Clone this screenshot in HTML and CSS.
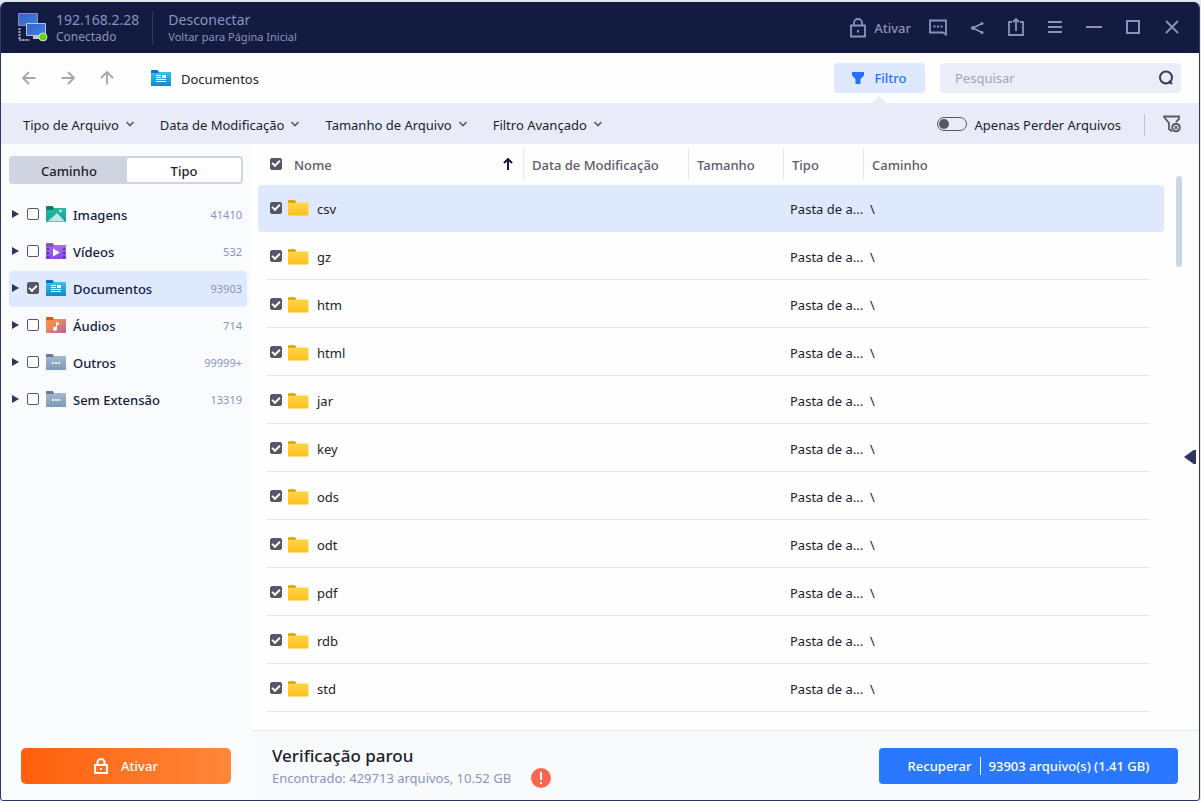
FILE: index.html
```
<!DOCTYPE html>
<html lang="pt-BR">
<head>
    <meta charset="UTF-8">
    <meta name="viewport" content="width=device-width, initial-scale=1.0">
    <title>192.168.2.28 - Documentos</title>
    <link rel="stylesheet" href="styles.css">
</head>
<body>

    <!-- Shared icons -->
    <svg class="sprite" aria-hidden="true">
        <defs>
            <linearGradient id="g-yellow" x1="0" y1="0" x2="0" y2="1"><stop offset="0" stop-color="#ffd54a"/><stop offset="1" stop-color="#ffc01e"/></linearGradient>
            <linearGradient id="g-green" x1="0" y1="0" x2="0" y2="1"><stop offset="0" stop-color="#2db8a0"/><stop offset="1" stop-color="#129f9c"/></linearGradient>
            <linearGradient id="g-purple" x1="0" y1="0" x2="0" y2="1"><stop offset="0" stop-color="#ac6cf4"/><stop offset="1" stop-color="#8747e4"/></linearGradient>
            <linearGradient id="g-blue" x1="0" y1="0" x2="0" y2="1"><stop offset="0" stop-color="#3bc5e2"/><stop offset="1" stop-color="#1484cf"/></linearGradient>
            <linearGradient id="g-orange" x1="0" y1="0" x2="1" y2="1"><stop offset="0.3" stop-color="#fa8b50"/><stop offset="1" stop-color="#a868a8"/></linearGradient>
            <linearGradient id="g-gray" x1="0" y1="0" x2="0" y2="1"><stop offset="0" stop-color="#a5b8cd"/><stop offset="1" stop-color="#7f99b7"/></linearGradient>
            <linearGradient id="g-screen" x1="0" y1="0" x2="1" y2="1"><stop offset="0" stop-color="#3263c8"/><stop offset="1" stop-color="#3f80e8"/></linearGradient>
        </defs>
        <symbol id="folder" viewBox="0 0 22 17"><path d="M1 3.500h20q.5 0 .5.500v12q0 .5-.5.500H1.500q-.5 0-.5-.5z" fill="url(#g-yellow)"/><path d="M1 4V1.500q0-.5.500-.5h6l2 2-1 1z" fill="#dca60c"/></symbol>
        <symbol id="f-image" viewBox="0 0 20 16"><path d="M0 2h20v14H0z" fill="url(#g-green)"/><path d="M0 4V1q0-1 1-1h5.500l1.500 2-1 2z" fill="#0a8064"/><path d="M0 16l5-5 3 3z" fill="#3bc4b4"/><path d="M2 15.500L11 7l8 8.500z" fill="#b9ede4"/><circle cx="14.500" cy="5" r="1.300" fill="#d9f7f0"/></symbol>
        <symbol id="f-video" viewBox="0 0 20 16"><path d="M0 2h20v14H0z" fill="url(#g-purple)"/><path d="M0 4V1q0-1 1-1h5.500l1.500 2-1 2z" fill="#8355c0"/><path d="M7 5.500v8l7-4z" fill="#fff"/><path d="M1 5h2v2H1zm0 4h2v2H1zm0 4h2v2H1zM17 5h2v2h-2zm0 4h2v2h-2zm0 4h2v2h-2z" fill="#573c80"/></symbol>
        <symbol id="f-doc" viewBox="0 0 20 16"><path d="M0 2h20v14H0z" fill="url(#g-blue)"/><path d="M0 3V1q0-1 1-1h5.500l1.500 2-1 1z" fill="#0870d0"/><path d="M5 5.500h5M5 7.500h5M5 9.500h10M5 11.500h10" stroke="#fff" fill="none"/><path d="M11 5h4v3h-4z" fill="#fff"/></symbol>
        <symbol id="f-audio" viewBox="0 0 20 16"><path d="M0 2h20v14H0z" fill="url(#g-orange)"/><path d="M0 3V1q0-1 1-1h5.500l1.500 2-1 1z" fill="#c56310"/><path d="M10 5l3 1v2l-2-.5V12a2 2 0 1 1-1-2z" fill="#fff"/></symbol>
        <symbol id="f-other" viewBox="0 0 20 16"><path d="M0 2h20v14H0z" fill="url(#g-gray)"/><path d="M0 3V1q0-1 1-1h5.500l1.500 2-1 1z" fill="#657a94"/><path d="M6 8h2v2H6zm3 0h2v2H9zm3 0h2v2h-2z" fill="#edf2f7"/></symbol>
        <symbol id="lock" viewBox="0 0 16 20"><path d="M1 7.500h14v11H1zM4 7.500V5a4 4 0 0 1 8 0v2.500" fill="none" stroke="currentColor" stroke-width="1.800"/><path d="M7 12h2v2.500H7z" fill="currentColor"/></symbol>
        <symbol id="lock-bold" viewBox="0 0 14 16"><path d="M1 7h12v8H1zM3.500 7V4.500a3.500 3.500 0 0 1 7 0V7" fill="none" stroke="currentColor" stroke-width="2"/><path d="M6 10h2v2H6z" fill="currentColor"/></symbol>
        <symbol id="chevron" viewBox="0 0 10 6"><path d="M1.500 1L5 4.500 8.500 1" fill="none" stroke="currentColor" stroke-width="1.600"/></symbol>
    </svg>

    <div class="window">
        <header class="titlebar">
            <svg class="logo" viewBox="0 0 30 30">
                <path d="M1.500 15v12h10" fill="none" stroke="#a9b1c6" stroke-width="2" stroke-dasharray="2 1"/>
                <path d="M.5.500h19v12H.5z" fill="url(#g-screen)" stroke="#8a91a5"/>
                <path d="M8.500 10.500h19v12h-19z" fill="url(#g-screen)" stroke="#b8c2d6"/>
                <path d="M15 23h7v3h-7z" fill="#c5c9d2"/>
                <circle cx="25" cy="24" r="4" fill="#62d800" stroke="#cddcc8"/>
            </svg>
            <div class="host">
                <span class="big">192.168.2.28</span>
                <span class="small">Conectado</span>
            </div>
            <div class="session">
                <a class="big" href="#">Desconectar</a>
                <a class="small" href="#">Voltar para Página Inicial</a>
            </div>
            <div class="window-tools">
                <button class="activate-link"><svg width="16" height="20"><use href="#lock"/></svg>Ativar</button>
                <button aria-label="Comentários"><svg width="20" height="20" viewBox="0 0 20 20"><path d="M2 2.500h16v14l-3-2H2zM5.500 8.500h2m1.500 0h2m1.500 0h2" fill="none" stroke="currentColor" stroke-width="1.800"/></svg></button>
                <button aria-label="Compartilhar"><svg width="20" height="20" viewBox="0 0 20 20"><path d="M15 5.500L6 10l9 4.500" fill="none" stroke="currentColor" stroke-width="1.800"/><circle cx="6" cy="10" r="2" fill="currentColor"/><circle cx="15" cy="5.500" r="1.500" fill="currentColor"/><circle cx="15" cy="14.500" r="1.500" fill="currentColor"/></svg></button>
                <button aria-label="Exportar"><svg width="20" height="20" viewBox="0 0 20 20"><path d="M6 4H3v13h14V4h-3M10 13V2M7 4l3-3 3 3" fill="none" stroke="currentColor" stroke-width="1.800"/></svg></button>
                <button aria-label="Menu"><svg width="20" height="20" viewBox="0 0 20 20"><path d="M3 4h14M3 9h14M3 14h14" stroke="currentColor" stroke-width="2"/></svg></button>
                <button aria-label="Minimizar"><svg width="20" height="20" viewBox="0 0 20 20"><path d="M2 9h16" stroke="currentColor" stroke-width="2"/></svg></button>
                <button aria-label="Maximizar"><svg width="20" height="20" viewBox="0 0 20 20"><path d="M4 3h12v12H4z" fill="none" stroke="currentColor" stroke-width="2"/></svg></button>
                <button aria-label="Fechar"><svg width="20" height="20" viewBox="0 0 20 20"><path d="M4 3l12 12M16 3L4 15" stroke="currentColor" stroke-width="1.800"/></svg></button>
            </div>
        </header>

        <nav class="toolbar">
            <button aria-label="Voltar"><svg width="14" height="14" viewBox="0 0 14 14"><path d="M13.500 7H1.500M7 1L1 7l6 6" fill="none" stroke="currentColor" stroke-width="1.800"/></svg></button>
            <button aria-label="Avançar"><svg width="14" height="14" viewBox="0 0 14 14"><path d="M.5 7h12M7 1l6 6-6 6" fill="none" stroke="currentColor" stroke-width="1.800"/></svg></button>
            <button aria-label="Acima"><svg width="14" height="14" viewBox="0 0 14 14"><path d="M7 13.500V1.500M1 7l6-6 6 6" fill="none" stroke="currentColor" stroke-width="1.800"/></svg></button>
            <svg class="crumb-icon" width="20" height="16"><use href="#f-doc"/></svg>
            <span class="crumb">Documentos</span>
            <button class="filter-btn"><svg width="12" height="12" viewBox="0 0 12 12"><path d="M0 0h12v3.500L8.500 7v5h-5V7L0 3.500z" fill="currentColor"/></svg>Filtro</button>
            <div class="search">
                <input type="text" placeholder="Pesquisar" aria-label="Pesquisar">
                <svg width="16" height="16" viewBox="0 0 16 16"><circle cx="8" cy="7.500" r="6" fill="none" stroke="currentColor" stroke-width="2"/><path d="M11 11l3 3" stroke="currentColor" stroke-width="2"/></svg>
            </div>
        </nav>

        <div class="filterbar">
            <button>Tipo de Arquivo<svg width="10" height="6"><use href="#chevron"/></svg></button>
            <button>Data de Modificação<svg width="10" height="6"><use href="#chevron"/></svg></button>
            <button>Tamanho de Arquivo<svg width="10" height="6"><use href="#chevron"/></svg></button>
            <button>Filtro Avançado<svg width="10" height="6"><use href="#chevron"/></svg></button>
            <label class="lost-only"><input type="checkbox" class="switch">Apenas Perder Arquivos</label>
            <button class="clear-filter" aria-label="Limpar filtro"><svg width="18" height="18" viewBox="0 0 18 18"><path d="M9 16.500L6 14V8L1 2V1.500h15V4l-3 3" fill="none" stroke="currentColor" stroke-width="1.800"/><circle cx="13" cy="12.500" r="3.800" fill="none" stroke="currentColor" stroke-width="2"/><path d="M11.500 11l3 3m0-3l-3 3" stroke="currentColor" stroke-width="1.200"/></svg></button>
        </div>

        <div class="content">
            <aside class="sidebar">
                <div class="tabs">
                    <button>Caminho</button>
                    <button class="active">Tipo</button>
                </div>
                <ul class="types">
                    <li><label><input type="checkbox"><svg width="20" height="16"><use href="#f-image"/></svg><span>Imagens</span><small>41410</small></label></li>
                    <li><label><input type="checkbox"><svg width="20" height="16"><use href="#f-video"/></svg><span>Vídeos</span><small>532</small></label></li>
                    <li class="selected"><label><input type="checkbox" checked><svg width="20" height="16"><use href="#f-doc"/></svg><span>Documentos</span><small>93903</small></label></li>
                    <li><label><input type="checkbox"><svg width="20" height="16"><use href="#f-audio"/></svg><span>Áudios</span><small>714</small></label></li>
                    <li><label><input type="checkbox"><svg width="20" height="16"><use href="#f-other"/></svg><span>Outros</span><small>99999+</small></label></li>
                    <li><label><input type="checkbox"><svg width="20" height="16"><use href="#f-other"/></svg><span>Sem Extensão</span><small>13319</small></label></li>
                </ul>
                <button class="activate"><svg width="14" height="16"><use href="#lock-bold"/></svg>Ativar</button>
            </aside>

            <main>
                <div class="list">
                    <table>
                        <colgroup>
                            <col class="col-name"><col class="col-date"><col class="col-size"><col class="col-type"><col>
                        </colgroup>
                        <thead>
                            <tr>
                                <th><div class="name"><label><input type="checkbox" checked>Nome</label><svg class="sort" width="10" height="12" viewBox="0 0 10 12"><path d="M5 12V1.500M1 5l4-4 4 4" fill="none" stroke="currentColor" stroke-width="2"/></svg></div></th>
                                <th>Data de Modificação</th>
                                <th>Tamanho</th>
                                <th>Tipo</th>
                                <th>Caminho</th>
                            </tr>
                        </thead>
                        <tbody id="rows"></tbody>
                    </table>
                    <div class="scrollbar"></div>
                </div>
                <footer>
                    <div class="status">
                        <h2>Verificação parou</h2>
                        <p>Encontrado: 429713 arquivos, 10.52 GB</p>
                    </div>
                    <svg class="alert" width="20" height="20" viewBox="0 0 20 20"><circle cx="10" cy="10" r="10" fill="#ff6650"/><path d="M9 4h2v8H9zm0 10h2v2H9z" fill="#fff"/></svg>
                    <button class="recover"><span>Recuperar</span><span>93903 arquivo(s) (1.41 GB)</span></button>
                </footer>
                <button class="expand" aria-label="Mostrar detalhes"></button>
            </main>
        </div>
    </div>

    <script>
        const folders = ['csv', 'gz', 'htm', 'html', 'jar', 'key', 'ods', 'odt', 'pdf', 'rdb', 'std'];
        let rows = document.getElementById("rows");

        folders.forEach((name, i) => {
            let tr = document.createElement("tr");
            if (i === 0) tr.classList.add("selected");
            tr.innerHTML = `
                <td><label class="name"><input type="checkbox" checked><svg width="22" height="17"><use href="#folder"/></svg>${name}</label></td>
                <td></td>
                <td></td>
                <td>Pasta de a...</td>
                <td>\\</td>`;
            rows.appendChild(tr);
        });
    </script>

</body>
</html>
```

FILE: styles.css
```
*, *::before, *::after {
    box-sizing: border-box;
}
body {
    margin: 0;
    padding: 2px 1px 0 0;
    background-color: #e0e6e9;
    font-family: "Noto Sans", "Open Sans", sans-serif;
    font-size: 13px;
    line-height: 18px;
    color: #1c1d2b;
}
button {
    display: flex;
    align-items: center;
    justify-content: center;
    padding: 0;
    border: none;
    background: none;
    font: inherit;
    color: inherit;
    cursor: pointer;
}
a {
    color: inherit;
    text-decoration: none;
}
svg {
    flex-shrink: 0;
}
.sprite {
    position: absolute;
    width: 0;
    height: 0;
}
.window {
    display: flex;
    flex-direction: column;
    min-height: calc(100vh - 2px);
    border: 1px solid #2d3560;
    border-top: none;
    border-radius: 6px 6px 4px 4px;
    background-color: #fefefe;
    overflow: hidden;
}

/* Title bar */
.titlebar {
    display: flex;
    align-items: center;
    height: 51px;
    padding: 0 17px;
    background-color: #141b41;
    color: #8a93bf;
}
.logo {
    width: 30px;
    height: 30px;
    margin-right: 8px;
}
.host, .session {
    display: flex;
    flex-direction: column;
}
.host {
    padding-right: 13px;
    border-right: 1px solid #2d3560;
    margin-right: 15px;
}
.big {
    font-size: 14px;
}
.small {
    font-size: 11px;
    line-height: 16px;
}
.host .small {
    font-size: 12px;
}
.window-tools {
    display: flex;
    gap: 19px;
    margin-left: auto;
}
.activate-link {
    gap: 8px;
    margin-right: -2px;
    font-weight: 500;
}

/* Navigation */
.toolbar {
    display: flex;
    align-items: center;
    height: 50px;
    padding: 0 18px 0 21px;
    color: #a3a5b4;
}
.toolbar > button {
    margin-right: 25px;
}
.crumb-icon {
    margin: 0 10px 0 12px;
}
.crumb {
    padding-top: 2px;
    color: #1c1d2b;
}
.toolbar .filter-btn {
    position: relative;
    gap: 10px;
    width: 91px;
    height: 30px;
    margin: 0 15px 0 auto;
    border-radius: 4px;
    background-color: #dfe9fe;
    color: #2672ff;
    font-weight: 500;
}
.filter-btn::after {
    content: "";
    position: absolute;
    top: 33px;
    left: 38px;
    border: 7px solid transparent;
    border-top: none;
    border-bottom-color: #e9ecf8;
}
.search {
    display: flex;
    align-items: center;
    width: 241px;
    height: 30px;
    padding: 0 7px 0 15px;
    border-radius: 4px;
    background-color: #ebedf8;
    color: #3a3b4c;
}
.search input {
    flex: 1;
    min-width: 0;
    padding: 0;
    border: none;
    background: none;
    font: inherit;
    outline: none;
}
.search input::placeholder {
    color: #a3a5b4;
}

/* Filters */
.filterbar {
    display: flex;
    align-items: center;
    gap: 25px;
    height: 41px;
    padding: 2px 18px 0 22px;
    background-color: #e9ecf8;
}
.filterbar button {
    gap: 6px;
}
.filterbar svg {
    margin-bottom: 2px;
    color: #595b6a;
}
.lost-only {
    display: flex;
    align-items: center;
    gap: 8px;
    margin-left: auto;
}
.filterbar .clear-filter {
    height: 22px;
    padding-left: 18px;
    border-left: 1px solid #bfc2d2;
    margin-left: -2px;
}

/* Checkboxes */
input[type="checkbox"] {
    appearance: none;
    display: grid;
    place-items: center;
    flex-shrink: 0;
    width: 12px;
    height: 12px;
    margin: 0 0 2px;
    border: 1px solid #555765;
    border-radius: 2px;
    background-color: #fff;
}
input[type="checkbox"]:checked {
    background-color: #555765;
}
input[type="checkbox"]:checked::after {
    content: "";
    width: 8px;
    height: 5px;
    border: 2px solid #fff;
    border-top: none;
    border-right: none;
    transform: translateY(-1px) rotate(-45deg);
}
input.switch[type="checkbox"] {
    place-items: center start;
    width: 30px;
    height: 14px;
    padding-left: 1px;
    border-radius: 7px;
    background-color: transparent;
}
.switch::before {
    content: "";
    width: 10px;
    height: 10px;
    border-radius: 50%;
    background-color: #555765;
}

/* Sidebar */
.content {
    display: flex;
    flex: 1;
}
.sidebar {
    display: flex;
    flex-direction: column;
    width: 251px;
    padding: 12px 5px 16px 8px;
    background-color: #fafbfd;
}
.tabs {
    display: grid;
    grid-template-columns: 116px 1fr;
    width: 234px;
    height: 28px;
    padding: 2px;
    border-radius: 4px;
    background-color: #d0d4e0;
    font-weight: 500;
}
.tabs button {
    padding-top: 2px;
}
.tabs .active {
    border-radius: 2px;
    background-color: #fff;
}
.types {
    margin: 13px 0 auto;
    padding: 0;
    list-style: none;
    font-weight: 500;
}
.types li {
    display: flex;
    align-items: center;
    height: 36px;
    margin-bottom: 1px;
    padding: 0 5px 0 3px;
    border-radius: 4px;
    color: #141b41;
}
.types li::before {
    content: "";
    margin-bottom: 2px;
    border: 4px solid transparent;
    border-left: 7px solid #2d3560;
    border-right: none;
}
.types li.selected {
    background-color: #dfe9fe;
}
.types label {
    display: flex;
    align-items: center;
    flex: 1;
    gap: 7px;
    padding-left: 8px;
}
.types svg {
    margin-bottom: 2px;
}
.types small {
    margin-left: auto;
    font-size: 11px;
    font-weight: 400;
    color: #8a93bf;
}
.activate {
    gap: 13px;
    height: 36px;
    margin: 0 16px 0 12px;
    border-radius: 5px;
    background: linear-gradient(90deg, #ff5f0c, #ff873b);
    color: #fff;
    font-weight: 500;
}

/* File list */
main {
    position: relative;
    display: flex;
    flex-direction: column;
    flex: 1;
}
.list {
    position: relative;
    flex: 1;
    padding: 0 35px 0 6px;
}
table {
    width: 100%;
    border-collapse: collapse;
    table-layout: fixed;
}
.col-name {
    width: 265px;
}
.col-date {
    width: 165px;
}
.col-size {
    width: 95px;
}
.col-type {
    width: 80px;
}
th {
    height: 41px;
    padding: 0 9px;
    background: linear-gradient(#dfeae9, #dfeae9) 0 4px / 1px 32px no-repeat;
    color: #595b6a;
    font-weight: 500;
    text-align: left;
}
th:first-child {
    background: none;
    padding-left: 12px;
}
td {
    height: 48px;
    padding: 2px 7px 0;
    background: linear-gradient(#e3e6f2, #e3e6f2) 0 100% / 100% 1px no-repeat;
    white-space: nowrap;
}
td:first-child {
    padding-left: 12px;
    background-position: 8px 100%;
}
td:last-child {
    background-size: calc(100% - 14px) 1px;
}
.name {
    display: flex;
    align-items: center;
}
.name label {
    display: flex;
    align-items: center;
    gap: 12px;
}
.name > svg {
    margin: 0 8px 2px 5px;
}
.name > .sort {
    margin: 0 1px 2px auto;
    color: #141b41;
}
tr.selected td {
    height: 47px;
    padding-top: 0;
    background: #dfe9fe;
}
tr.selected td:first-child {
    border-radius: 4px 0 0 4px;
}
tr.selected td:last-child {
    border-radius: 0 4px 4px 0;
}
.scrollbar {
    position: absolute;
    top: 32px;
    right: 17px;
    width: 6px;
    height: 91px;
    border-radius: 3px;
    background-color: #cbd7e5;
}
.expand {
    position: absolute;
    top: calc(50% - 22px);
    right: 3px;
    width: 12px;
    height: 14px;
    background-color: #2d3560;
    clip-path: polygon(0 50%, 80% 0, 100% 0, 100% 100%, 80% 100%);
}

/* Status */
footer {
    display: flex;
    align-items: center;
    height: 70px;
    padding: 0 21px 0 20px;
    border-top: 1px solid #e1ecec;
    background-color: #f9fafc;
}
.status h2 {
    margin: 0;
    font-size: 17px;
    font-weight: 500;
    line-height: 24px;
}
.status p {
    margin: 0;
    line-height: 20px;
    color: #8a93bf;
}
.alert {
    margin: 24px 0 0 20px;
}
.recover {
    width: 299px;
    height: 36px;
    margin-left: auto;
    border-radius: 4px;
    background-color: #2a78ff;
    color: #fff;
    font-weight: 500;
}
.recover span + span {
    padding-left: 8px;
    border-left: 1px solid #fff;
    margin-left: 8px;
}
```
